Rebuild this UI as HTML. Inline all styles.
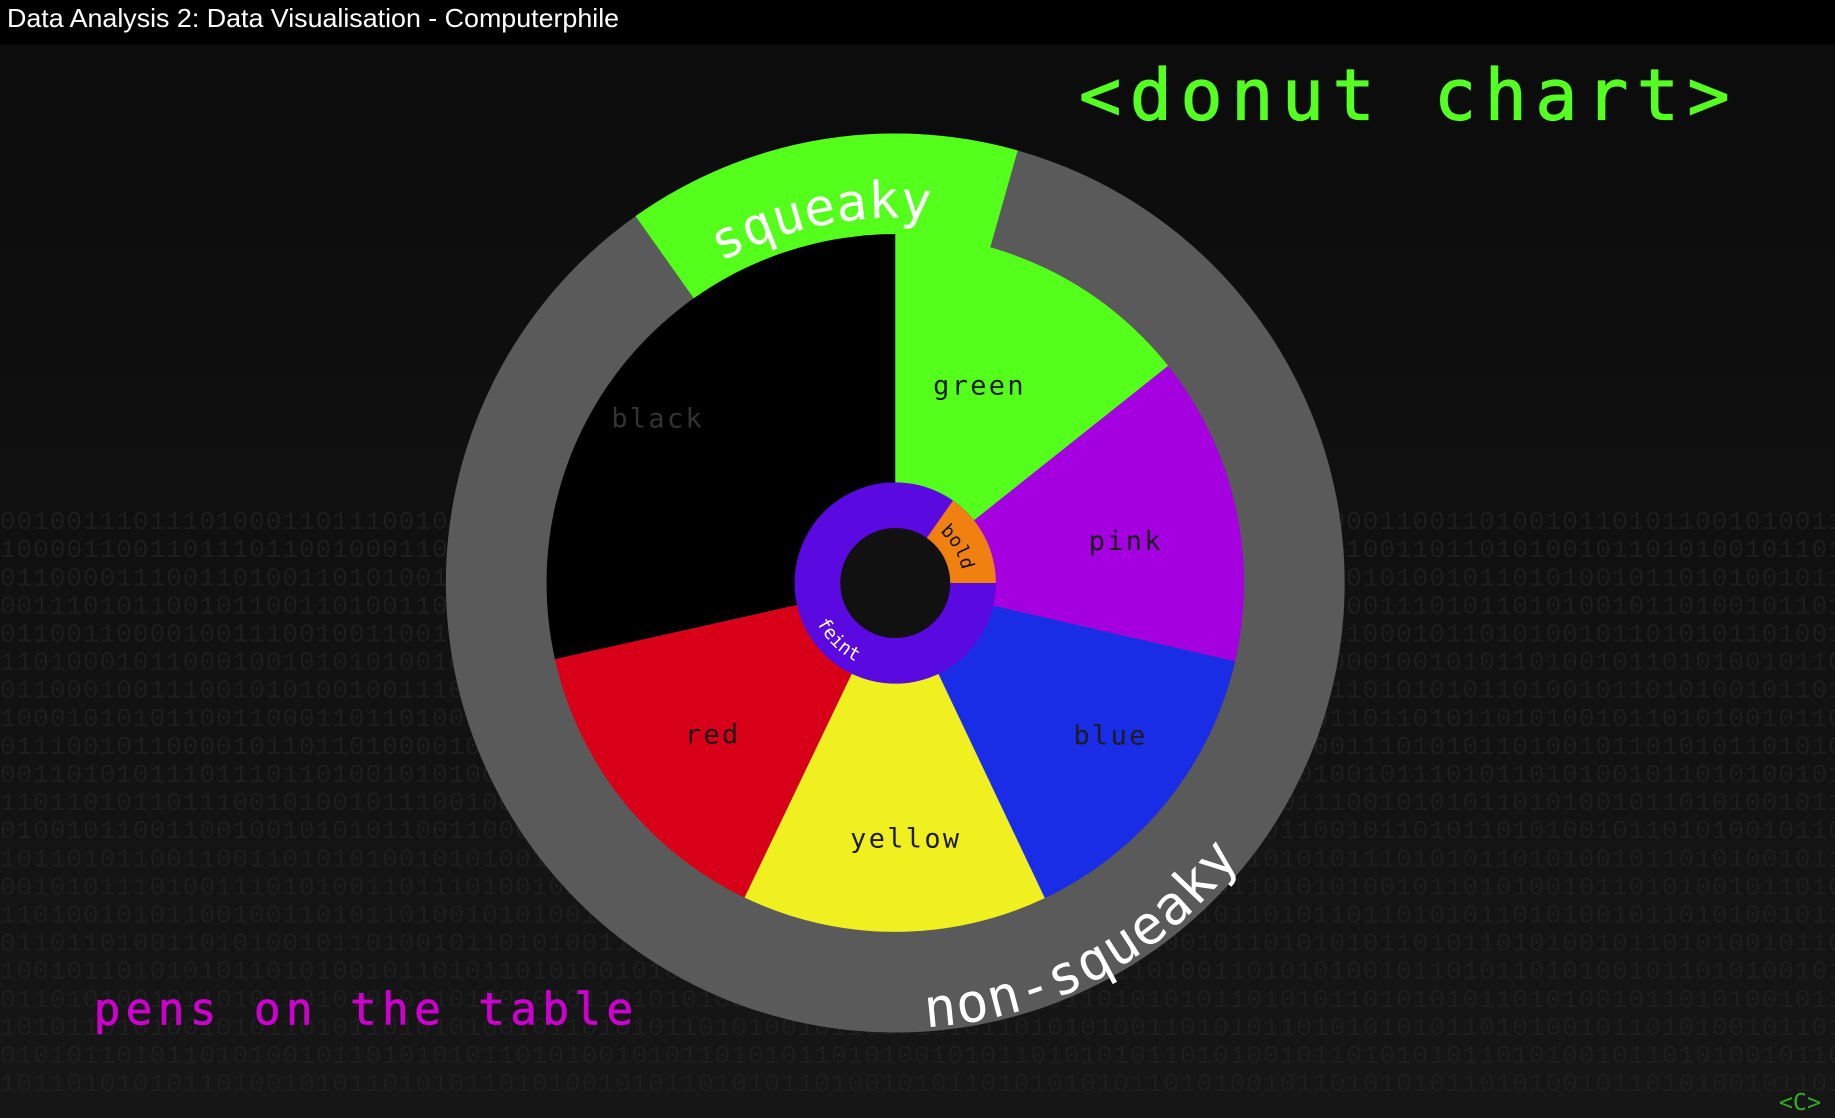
<!DOCTYPE html>
<html><head><meta charset="utf-8"><style>
html,body{margin:0;padding:0;background:#0e0e0e;overflow:hidden}
svg{display:block}
</style></head><body>
<svg width="1835" height="1118" viewBox="0 0 1568 955" preserveAspectRatio="none" xmlns="http://www.w3.org/2000/svg">
<defs>
<linearGradient id="bg" x1="0" y1="0" x2="0" y2="1">
<stop offset="0" stop-color="#0b0b0b"/><stop offset="1" stop-color="#161616"/>
</linearGradient>
<path id="sq" d="M494.8,342 A312,312 0 0 1 965.5,259"/>
<path id="nsq" d="M495,752 A362,362 0 0 0 1110,393"/>
<path id="fe" d="M700,460.5 A75,75 0 0 0 802.5,563"/>
<path id="bo" d="M784.8,443.5 A58,58 0 0 1 822.1,508.1"/>
</defs>
<rect width="1568" height="955" fill="url(#bg)"/>
<g font-family="Liberation Mono, monospace" font-size="22" fill="#1e1e1e" letter-spacing="1">
<text x="0" y="452">001001110111010001101110010110011101100101100100100101001101100011010001110010110001100110100101101011001010011010110</text>
<text x="0" y="476">100001100110111011001000110110100010010101111011011010110001011001011010100011010100110110101001011010100101101011010</text>
<text x="0" y="500">011000011100110100110101001001010011011101001001001001101101110010010110001101011010100101101010010110101001011010101</text>
<text x="0" y="524">001110101100101100110100110010111010010001110111100011001001001101001001110101011001110101101010010110100101101010010</text>
<text x="0" y="548">011001100001001110010011001001101011010100101001010100100001100010110011000110101100010110101001011010101101001010110</text>
<text x="0" y="572">110100010110001001010101001010010100010110011001110110001101101001101001001110110001001010110100101101010010110101010</text>
<text x="0" y="596">011000100111001010100100111000110011011011110010101000110100100111010101010101101101010101101001011010100101101011010</text>
<text x="0" y="620">100010101011001100011011010010101001101101001101011110010111001011001001000110001101101011010100101101010010110101001</text>
<text x="0" y="644">011100101100001011011010000101010111000011010111011010100010010110010101101101100111010101101001011010101101010010110</text>
<text x="0" y="668">001101010111011101101001010100101100100100010010110110110001000110101010010101010010111010110101001011010100101101010</text>
<text x="0" y="692">110110101101110010100101110010010001011010111010010101011101100010111010011010111001010101101010010110101001011010101</text>
<text x="0" y="716">010010110011001001010101100110001101010111001101000100011101001101011101000101100101101011010100101101010010110101010</text>
<text x="0" y="740">101101011001100110101010010101001101110100110101011011010010110010010101100101010111010101101010010110101001011010110</text>
<text x="0" y="764">001010111010011101010011011101001011011011000101110110010101011101001010101101010100101101010010110101001011010101011</text>
<text x="0" y="788">110100101011001001101011010010101001101010101110110010010101010011010110101101011011010101101010010110101001011010100</text>
<text x="0" y="812">011011010011010100101101001011010100110101101001011010110101001101010100101101010101101011010100101101010010110101011</text>
<text x="0" y="836">100101101010101101010010110101101010010101101011010101010010110101011010011010101001011010110101001011010100101101010</text>
<text x="0" y="860">011010100101101011010101011010010101101010100101011010110100101011010101011010101101010101101010010110101001011010101</text>
<text x="0" y="884">101011010100101011010110101010010110101011010100101101010101101010100110101011010101010110101001011010100101101011010</text>
<text x="0" y="908">010101101011010100101101010101101010010101101010110101001010110101010110101001011010101011010100101101010010110101010</text>
<text x="0" y="932">101101010101101001010110101011010100101011010101101001010110101010101101010010110101010110101001011010100101101010110</text>
</g>
<rect x="0" y="0" width="1568" height="38" fill="#000"/>
<text x="6" y="23" font-family="Liberation Sans, sans-serif" font-size="22" fill="#fff" textLength="523" lengthAdjust="spacingAndGlyphs">Data Analysis 2: Data Visualisation - Computerphile</text>
<text x="922" y="102" font-family="DejaVu Sans Mono, monospace" font-size="60" fill="#55ff22" stroke="#55ff22" stroke-width="1" textLength="556" lengthAdjust="spacing">&lt;donut chart&gt;</text>
<text x="80" y="875" font-family="DejaVu Sans Mono, monospace" font-size="38" fill="#cc00cc" stroke="#cc00cc" stroke-width="0.6" textLength="461" lengthAdjust="spacing">pens on the table</text>
<text x="1520" y="948" font-family="DejaVu Sans Mono, monospace" font-size="20" fill="#33aa22">&lt;C&gt;</text>

<circle cx="765" cy="498" r="384" fill="#5a5a5a"/>
<path d="M765,498 L543.1,184.6 A384,384 0 0 1 869.6,128.5 Z" fill="#55ff1c"/>
<path d="M765,498 L765,200 A298,298 0 0 1 998.2,312.5 Z" fill="#55ff1c"/>
<path d="M765,498 L998.2,312.5 A298,298 0 0 1 1055.4,565 Z" fill="#a400e0"/>
<path d="M765,498 L1055.4,565 A298,298 0 0 1 892.8,767.2 Z" fill="#1a2de6"/>
<path d="M765,498 L892.8,767.2 A298,298 0 0 1 636.2,766.7 Z" fill="#f0f020"/>
<path d="M765,498 L636.2,766.7 A298,298 0 0 1 474.2,563 Z" fill="#d80018"/>
<path d="M765,498 L474.2,563 A298,298 0 0 1 765,200 Z" fill="#000"/>
<circle cx="765" cy="498" r="86" fill="#5a0ae0"/>
<path d="M765,498 L814.3,427.6 A86,86 0 0 1 851,498 Z" fill="#f08010"/>
<circle cx="765" cy="498" r="47" fill="#111"/>

<g font-family="DejaVu Sans Mono, monospace" font-size="23" letter-spacing="2" text-anchor="middle" fill="#1c1c1c">
<text x="562" y="365" fill="#333">black</text>
<text x="837" y="337">green</text>
<text x="962" y="470">pink</text>
<text x="949" y="636">blue</text>
<text x="774" y="724">yellow</text>
<text x="609" y="635">red</text>
</g>
<g font-family="DejaVu Sans Mono, monospace" text-anchor="middle">
<text font-size="44" fill="#fff" dx="-8"><textPath href="#sq" startOffset="50%">squeaky</textPath></text>
<text font-size="46" fill="#fff" letter-spacing="1" dx="-12"><textPath href="#nsq" startOffset="50%">non-squeaky</textPath></text>
<text font-size="16" fill="#fff"><textPath href="#fe" startOffset="50%">feint</textPath></text>
<text font-size="16" fill="#111"><textPath href="#bo" startOffset="50%">bold</textPath></text>
</g>
</svg>
</body></html>
